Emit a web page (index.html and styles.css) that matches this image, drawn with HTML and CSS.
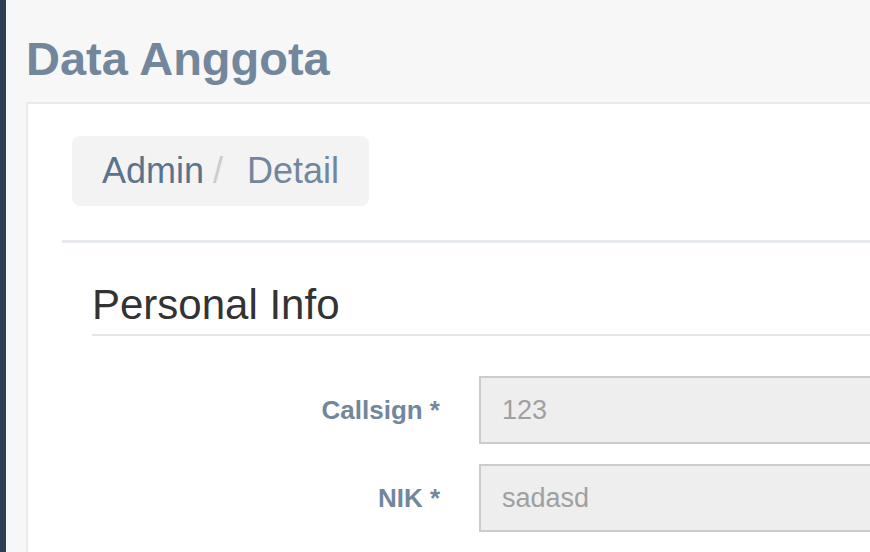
FILE: index.html
```html
<!DOCTYPE html>
<html lang="id">
<head>
<meta charset="utf-8">
<title>Data Anggota</title>
<link rel="stylesheet" href="styles.css">
</head>
<body>
<div class="layout">
  <aside class="sidebar"></aside>
  <main class="main">
    <h3 class="page-title">Data Anggota</h3>
    <section class="panel">
      <nav class="breadcrumb">
        <a class="crumb-link" href="#">Admin</a>
        <span class="crumb-sep">/</span>
        <span class="crumb-active">Detail</span>
      </nav>
      <div class="divider"></div>
      <h4 class="legend">Personal Info</h4>
      <form class="form">
        <label class="form-label" for="callsign">Callsign *</label>
        <input class="form-input" id="callsign" type="text" value="123" readonly>
        <label class="form-label" for="nik">NIK *</label>
        <input class="form-input" id="nik" type="text" value="sadasd" readonly>
      </form>
    </section>
  </main>
</div>
</body>
</html>
```
FILE: styles.css
```css
* { box-sizing: border-box; }
html, body {
  margin: 0;
  padding: 0;
  height: 100%;
  overflow: hidden;
  font-family: "Liberation Sans", Arial, sans-serif;
}
.layout {
  display: flex;
  height: 552px;
  width: 870px;
  overflow: hidden;
}
.sidebar {
  flex: 0 0 6px;
  background: #2A3F54;
}
.main {
  flex: 1 1 auto;
  background: #F7F7F7;
  padding: 34px 0 0 20px;
  overflow: hidden;
}
.page-title {
  margin: 0 0 18px 0;
  font-size: 47px;
  line-height: 50px;
  font-weight: 700;
  color: #73879C;
}
.panel {
  width: 1100px;
  background: #fff;
  border: 2px solid #E6E9ED;
  padding: 32px 0 40px 34px;
  min-height: 500px;
}
.breadcrumb {
  display: inline-flex;
  align-items: center;
  height: 70px;
  margin-left: 10px;
  padding: 0 30px 0 30px;
  background: #F3F3F3;
  border-radius: 8px;
  font-size: 36px;
  line-height: 40px;
}
.crumb-link {
  color: #5A738E;
  text-decoration: none;
}
.crumb-sep {
  color: #CCCCCC;
  margin: 0 24px 0 9px;
}
.crumb-active {
  color: #73879C;
}
.divider {
  height: 3px;
  background: #E6E9ED;
  margin-top: 34px;
}
.legend {
  margin: 39px 0 0 30px;
  padding: 0 0 6px 0;
  font-size: 42px;
  line-height: 46px;
  font-weight: 400;
  color: #333;
  border-bottom: 2px solid #E5E5E5;
}
.form {
  margin: 40px 0 0 30px;
  display: grid;
  grid-template-columns: 348px 1fr;
  column-gap: 39px;
  row-gap: 20px;
  align-items: center;
}
.form-label {
  text-align: right;
  font-size: 26px;
  font-weight: 700;
  color: #73879C;
}
.form-input {
  height: 68px;
  width: 100%;
  border: 2px solid #CCCCCC;
  background: #EEEEEE;
  padding: 0 21px;
  font-family: "Liberation Sans", Arial, sans-serif;
  font-size: 27px;
  color: #A0A0A0;
  outline: none;
  border-radius: 0;
}
```
